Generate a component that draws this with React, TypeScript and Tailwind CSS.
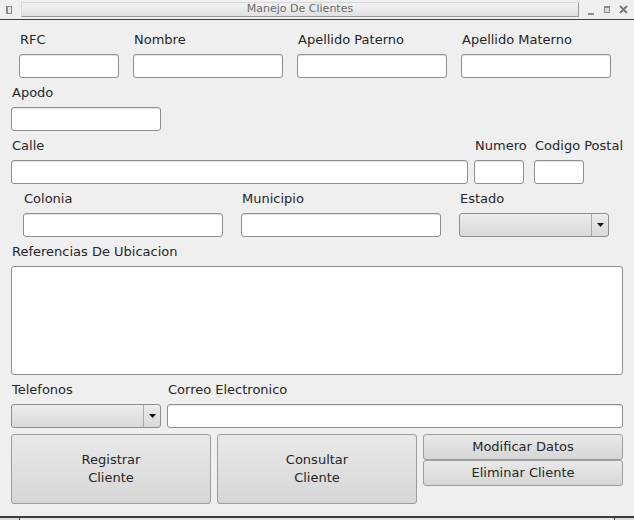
import React from 'react';

const font = { fontFamily: '"DejaVu Sans", "Liberation Sans", sans-serif' };

const inputCls = 'h-6 bg-white border border-[#8e8e8e] rounded-[3px] shadow-[inset_0_1px_0_#e4e4e4]';
const labelCls = 'h-4 leading-4 pl-[1px] whitespace-nowrap text-[13px] text-[#262626]';

function Field({ label, width, combo }: { label: string; width: string; combo?: boolean }) {
  return (
    <div className={`flex flex-col gap-[6px] ${width}`}>
      <div className={labelCls}>{label}</div>
      {combo ? <Combo /> : <div className={inputCls} />}
    </div>
  );
}

function Combo() {
  return (
    <div className="flex h-6 rounded-[3px] border border-[#8e8e8e] bg-gradient-to-b from-[#ececec] to-[#d9d9d9]">
      <div className="flex-1" />
      <div className="flex w-[17px] items-center justify-center border-l border-[#a8a8a8]">
        <svg width="7" height="4" viewBox="0 0 7 4">
          <path d="M0 0h7L3.5 4z" fill="#111" />
        </svg>
      </div>
    </div>
  );
}

function Btn({ children, h }: { children: React.ReactNode; h: string }) {
  return (
    <div
      className={`flex ${h} w-[200px] flex-col items-center justify-center rounded-[3px] border border-[#9c9c9c] bg-gradient-to-b from-[#e9e9e9] to-[#d6d6d6] text-[13px] leading-[18px] text-[#262626]`}
    >
      {children}
    </div>
  );
}

export default function App() {
  return (
    <div className="h-[520px] w-[634px] overflow-hidden bg-[#efefef]" style={font}>
      {/* barra de titulo */}
      <div className="flex h-5 items-center border-b border-[#3c3c3c] bg-[#efefef]">
        <div className="ml-[6px] h-[8px] w-[6px] shrink-0 border border-[#8a8a8a] border-l-2 bg-[#e8e8e8]" />
        <div className="ml-[9px] flex h-[15px] w-[558px] shrink-0 items-center justify-center border border-[#d8d8d8] border-b-[#9a9a9a] border-r-[#9a9a9a] bg-gradient-to-b from-[#f2f2f2] to-[#e0e0e0] text-[11px] text-[#6a6a6a]">
          Manejo De Clientes
        </div>
        <div className="ml-[9px] mt-[8px] h-[2px] w-[6px] shrink-0 bg-[#8a8a8a]" />
        <div className="ml-[10px] h-[7px] w-[6px] shrink-0 border border-[#8a8a8a] border-t-2 bg-[#dcdcdc]" />
        <div className="ml-[8px] flex h-[10px] w-[10px] shrink-0 items-center justify-center">
          <svg width="9" height="9" viewBox="0 0 9 9" className="block">
            <path d="M1 1L8 8M8 1L1 8" stroke="#777777" strokeWidth="2" fill="none" />
          </svg>
        </div>
      </div>

      {/* fila 1 */}
      <div className="mt-3 flex gap-[14px] pl-[19px]">
        <Field label="RFC" width="w-[100px]" />
        <Field label="Nombre" width="w-[150px]" />
        <Field label="Apellido Paterno" width="w-[150px]" />
        <Field label="Apellido Materno" width="w-[150px]" />
      </div>

      <div className="mt-[7px] flex pl-[11px]">
        <Field label="Apodo" width="w-[150px]" />
      </div>

      <div className="mt-[7px] flex pl-[11px]">
        <Field label="Calle" width="w-[457px]" />
        <div className="ml-[6px]">
          <Field label="Numero" width="w-[50px]" />
        </div>
        <div className="ml-[10px]">
          <Field label="Codigo Postal" width="w-[50px]" />
        </div>
      </div>

      <div className="mt-[7px] flex gap-[18px] pl-[23px]">
        <Field label="Colonia" width="w-[200px]" />
        <Field label="Municipio" width="w-[200px]" />
        <Field label="Estado" width="w-[150px]" combo />
      </div>

      <div className="mt-[7px] flex flex-col gap-[6px] pl-[11px]">
        <div className={labelCls}>Referencias De Ubicacion</div>
        <div className="h-[109px] w-[612px] rounded-[3px] border border-[#8e8e8e] bg-white" />
      </div>

      <div className="mt-[7px] flex gap-[6px] pl-[11px]">
        <Field label="Telefonos" width="w-[150px]" combo />
        <Field label="Correo Electronico" width="w-[456px]" />
      </div>

      {/* botones */}
      <div className="mt-[6px] flex gap-[6px] pl-[11px]">
        <Btn h="h-[70px]">
          <span>Registrar</span>
          <span>Cliente</span>
        </Btn>
        <Btn h="h-[70px]">
          <span>Consultar</span>
          <span>Cliente</span>
        </Btn>
        <div className="flex flex-col">
          <Btn h="h-[26px]">Modificar Datos</Btn>
          <Btn h="h-[26px]">Eliminar Cliente</Btn>
        </div>
      </div>

      {/* ventana inferior */}
      <div className="mt-[12px] flex h-[6px] border-t-2 border-[#3c3c3c] bg-[#dcdcdc]">
        <div className="w-[20px] border-r border-[#3c3c3c]" />
        <div className="w-[594px] bg-[#e6e6e6]" />
        <div className="flex-1 border-l border-[#3c3c3c]" />
      </div>
    </div>
  );
}
